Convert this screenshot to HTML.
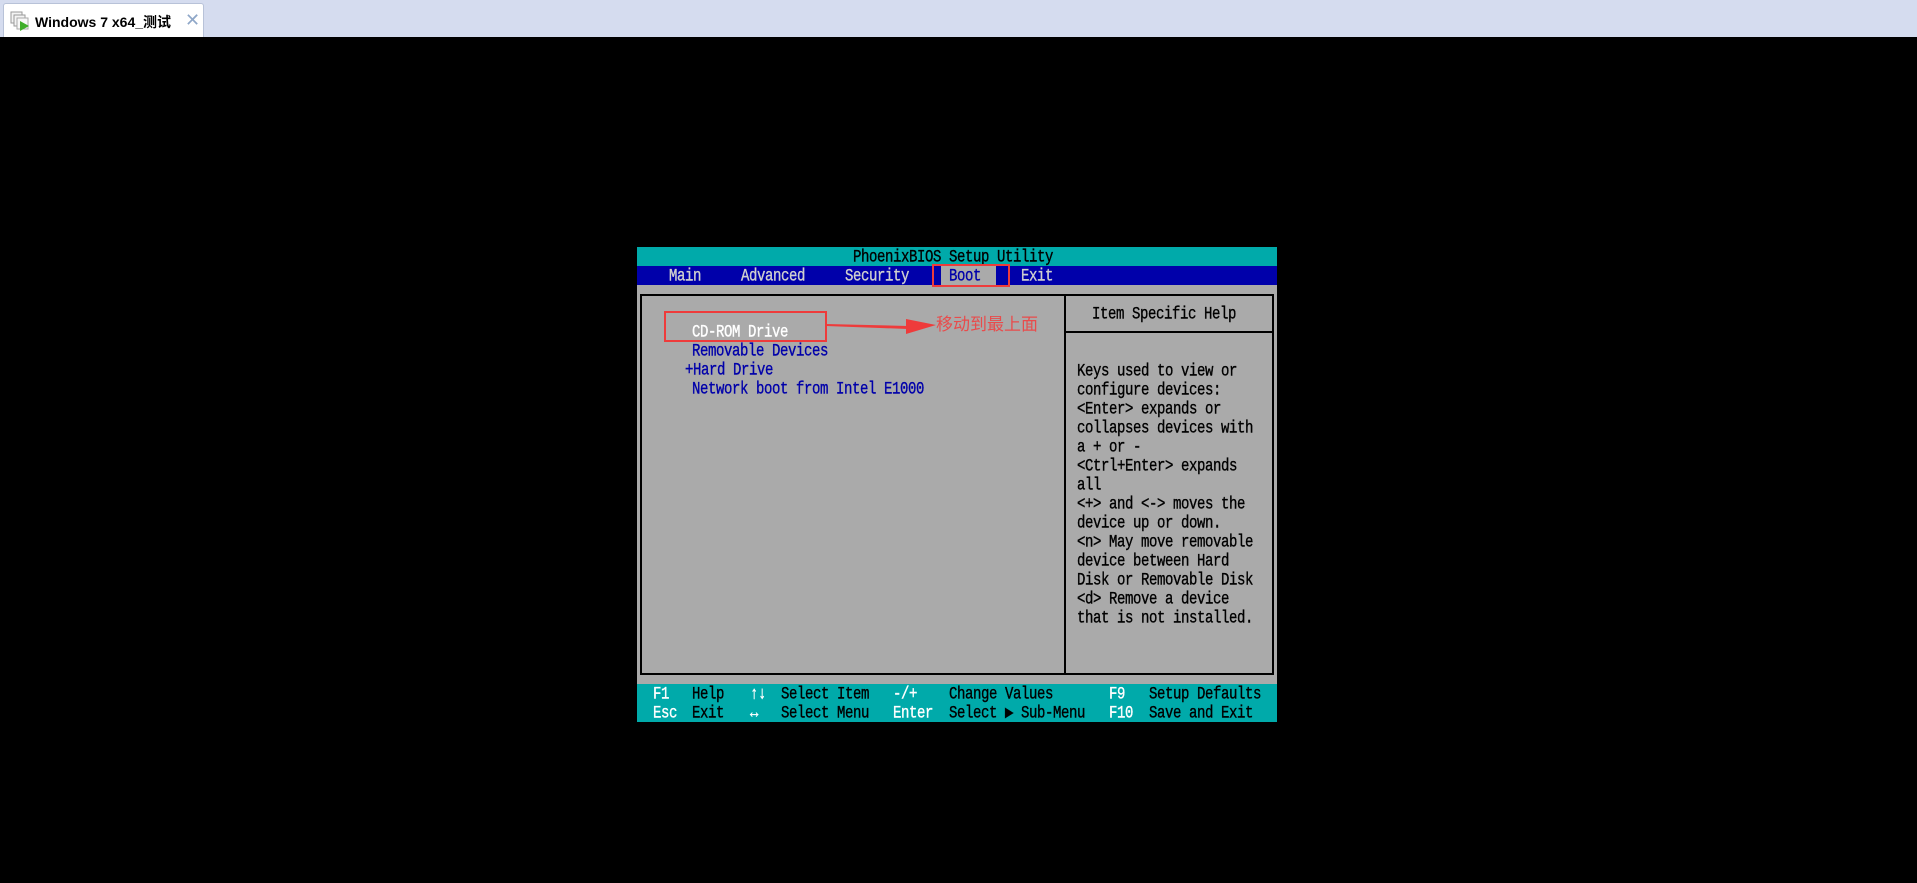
<!DOCTYPE html>
<html><head><meta charset="utf-8"><style>
*{margin:0;padding:0;box-sizing:border-box}
body{width:1917px;height:883px;background:#000;position:relative;overflow:hidden;font-family:"Liberation Sans","Noto Sans CJK SC",sans-serif}
.top{position:absolute;left:0;top:0;width:1917px;height:37px;background:#d5dcef}
.tab{position:absolute;left:3px;top:3px;width:201px;height:34px;background:#fff;border:1px solid #b8c2d8;border-bottom:none;border-radius:3px 3px 0 0}
.tabt{position:absolute;left:31px;top:8px;font-size:14px;font-weight:bold;color:#000;white-space:nowrap}
.x{position:absolute;left:181px;top:6px;font-size:18px;color:#8fa7c8}
.t{position:absolute;font-family:"Liberation Mono",monospace;font-size:14px;letter-spacing:-0.4px;line-height:19px;height:19px;white-space:pre;transform:translateY(2px) scaleY(1.25);transform-origin:0 50%;-webkit-text-stroke:0.3px currentColor}
.r{position:absolute}
</style></head><body>
<div class="top"></div>
<div class="tab">
<svg style="position:absolute;left:6px;top:7px" width="20" height="22" viewBox="0 0 20 22">
<rect x="1" y="1" width="11" height="11" fill="#f4f4f4" stroke="#999"/>
<rect x="4" y="4" width="11" height="11" fill="#f4f4f4" stroke="#999"/>
<rect x="7" y="7" width="11" height="11" fill="#f8f8f8" stroke="#aaa"/>
<path d="M10 10 L19 15 L10 20 Z" fill="#3fae2a"/>
</svg>
<div class="tabt">Windows 7 x64_测试</div>
<div class="x">✕</div>
</div>

<div class="r" style="left:637px;top:247px;width:640px;height:475px;background:#aaaaaa"></div>
<div class="r" style="left:637px;top:247px;width:640px;height:19px;background:#00aaaa"></div>
<div class="r" style="left:637px;top:266px;width:640px;height:19px;background:#0000aa"></div>
<div class="r" style="left:637px;top:684px;width:640px;height:38px;background:#00aaaa"></div>
<div class="t" style="left:853px;top:247px;color:#000">PhoenixBIOS Setup Utility</div>
<div class="r" style="left:941px;top:266px;width:55px;height:19px;background:#aaaaaa"></div>
<div class="t" style="left:669px;top:266px;color:#cfcfcf">Main</div>
<div class="t" style="left:741px;top:266px;color:#cfcfcf">Advanced</div>
<div class="t" style="left:845px;top:266px;color:#cfcfcf">Security</div>
<div class="t" style="left:949px;top:266px;color:#0000aa">Boot</div>
<div class="t" style="left:1021px;top:266px;color:#cfcfcf">Exit</div>
<div class="r" style="left:932px;top:264px;width:78px;height:23px;border:2px solid #ee3b3b"></div>

<div class="r" style="left:640px;top:294px;width:634px;height:381px;border:2px solid #000"></div>
<div class="r" style="left:1064px;top:294px;width:2px;height:381px;background:#000"></div>
<div class="r" style="left:1064px;top:331px;width:210px;height:2px;background:#000"></div>

<div class="t" style="left:1092px;top:304px;color:#000">Item Specific Help</div>
<div class="t" style="left:692px;top:322px;color:#fff">CD-ROM Drive</div>
<div class="t" style="left:692px;top:341px;color:#0000aa">Removable Devices</div>
<div class="t" style="left:685px;top:360px;color:#0000aa">+Hard Drive</div>
<div class="t" style="left:692px;top:379px;color:#0000aa">Network boot from Intel E1000</div>

<div class="t" style="left:1077px;top:361px;color:#000">Keys used to view or</div>
<div class="t" style="left:1077px;top:380px;color:#000">configure devices:</div>
<div class="t" style="left:1077px;top:399px;color:#000">&lt;Enter&gt; expands or</div>
<div class="t" style="left:1077px;top:418px;color:#000">collapses devices with</div>
<div class="t" style="left:1077px;top:437px;color:#000">a + or -</div>
<div class="t" style="left:1077px;top:456px;color:#000">&lt;Ctrl+Enter&gt; expands</div>
<div class="t" style="left:1077px;top:475px;color:#000">all</div>
<div class="t" style="left:1077px;top:494px;color:#000">&lt;+&gt; and &lt;-&gt; moves the</div>
<div class="t" style="left:1077px;top:513px;color:#000">device up or down.</div>
<div class="t" style="left:1077px;top:532px;color:#000">&lt;n&gt; May move removable</div>
<div class="t" style="left:1077px;top:551px;color:#000">device between Hard</div>
<div class="t" style="left:1077px;top:570px;color:#000">Disk or Removable Disk</div>
<div class="t" style="left:1077px;top:589px;color:#000">&lt;d&gt; Remove a device</div>
<div class="t" style="left:1077px;top:608px;color:#000">that is not installed.</div>

<div class="r" style="left:664px;top:311px;width:163px;height:31px;border:2px solid #ee3b3b"></div>
<svg class="r" style="left:826px;top:312px" width="112" height="24" viewBox="0 0 112 24">
<polygon points="0,12 82,14 82,17 0,14" fill="#ee3b3b"/>
<polygon points="80,7 110,13 80,22" fill="#ee3b3b"/>
</svg>
<div class="r" style="left:936px;top:313px;font-size:17px;line-height:20px;color:#e84c4c;font-family:'Noto Sans CJK SC',sans-serif">移动到最上面</div>

<div class="t" style="left:653px;top:684px;color:#fff">F1</div>
<div class="t" style="left:692px;top:684px;color:#000">Help</div>
<div class="t" style="left:750px;top:684px;color:#fff">↑↓</div>
<div class="t" style="left:781px;top:684px;color:#000">Select Item</div>
<div class="t" style="left:893px;top:684px;color:#fff">-/+</div>
<div class="t" style="left:949px;top:684px;color:#000">Change Values</div>
<div class="t" style="left:1109px;top:684px;color:#fff">F9</div>
<div class="t" style="left:1149px;top:684px;color:#000">Setup Defaults</div>
<div class="t" style="left:653px;top:703px;color:#fff">Esc</div>
<div class="t" style="left:692px;top:703px;color:#000">Exit</div>
<div class="t" style="left:750px;top:703px;color:#fff">↔</div>
<div class="t" style="left:781px;top:703px;color:#000">Select Menu</div>
<div class="t" style="left:893px;top:703px;color:#fff">Enter</div>
<div class="t" style="left:949px;top:703px;color:#000">Select ▶ Sub-Menu</div>
<div class="t" style="left:1109px;top:703px;color:#fff">F10</div>
<div class="t" style="left:1149px;top:703px;color:#000">Save and Exit</div>
</body></html>
